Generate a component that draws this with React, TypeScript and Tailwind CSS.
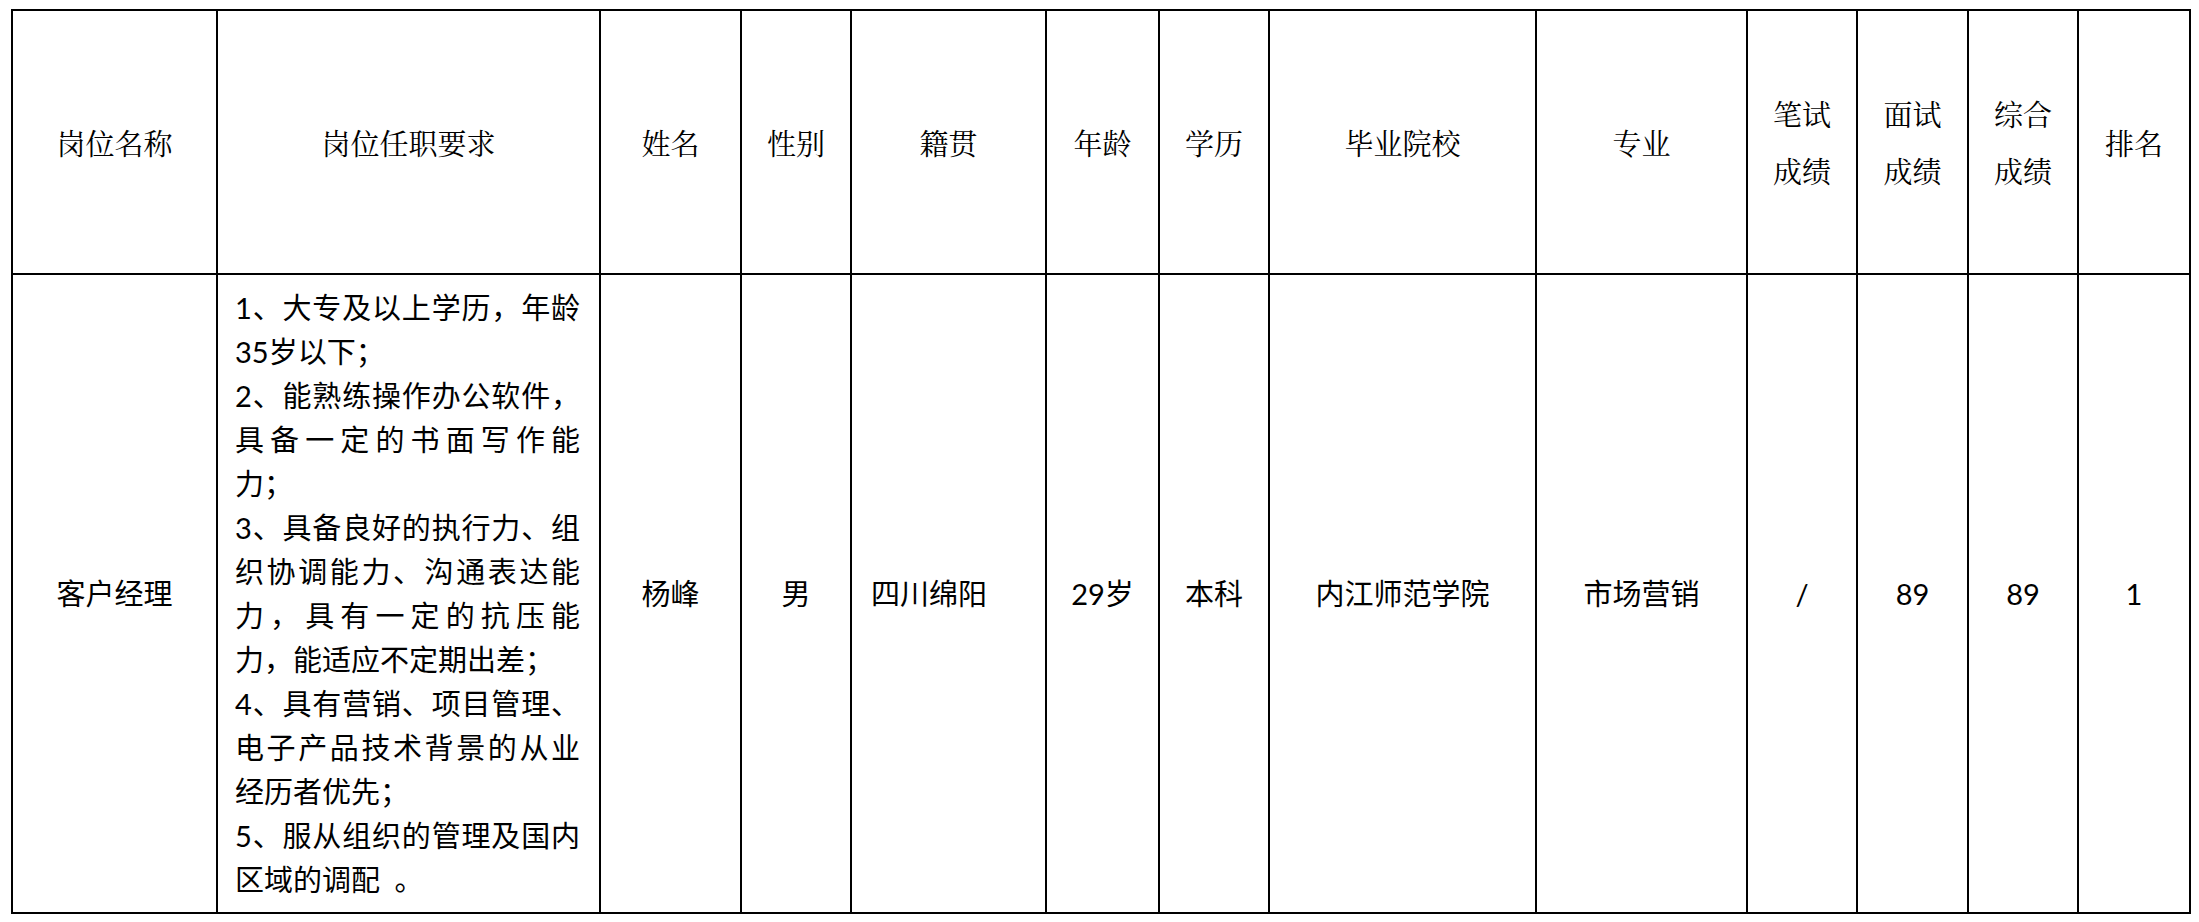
import React from "react";

const headers: React.ReactNode[] = [
  "岗位名称",
  "岗位任职要求",
  "姓名",
  "性别",
  "籍贯",
  "年龄",
  "学历",
  "毕业院校",
  "专业",
  <>笔试<br />成绩</>,
  <>面试<br />成绩</>,
  <>综合<br />成绩</>,
  "排名",
];

const reqs = [
  "1、大专及以上学历，年龄35岁以下；",
  "2、能熟练操作办公软件，具备一定的书面写作能力；",
  "3、具备良好的执行力、组织协调能力、沟通表达能力，具有一定的抗压能力，能适应不定期出差；",
  "4、具有营销、项目管理、电子产品技术背景的从业经历者优先；",
  "5、服从组织的管理及国内区域的调配\u2002。",
];

const headCls =
  "bg-white flex items-center justify-center text-center text-[29px] leading-[57px] text-black font-['Noto_Serif_CJK_SC','Noto_Serif_SC','Noto_Sans_CJK_SC',serif]";
const bodyCls =
  "bg-white flex items-center justify-center text-center text-[29px] leading-[44px] text-black font-['Lato','Noto_Sans_CJK_SC',sans-serif]";

export default function App() {
  return (
    <div className="min-h-screen bg-white pt-[9px] pl-[11px]">
      <div className="inline-grid grid-cols-[203px_381px_139px_108px_193px_111px_108px_265px_209px_108px_109px_108px_110px] grid-rows-[262px_auto] gap-[2px] bg-black p-[2px]">
        {headers.map((h, i) => (
          <div key={i} className={headCls}>
            <div>{h}</div>
          </div>
        ))}
        <div className={bodyCls}>客户经理</div>
        <div className="bg-white pl-[17px] pr-[19px] pt-[11px] pb-[10px] text-[29px] leading-[44px] text-black text-justify font-['Lato','Noto_Sans_CJK_SC',sans-serif]">
          {reqs.map((r, i) => (
            <div key={i}>{r}</div>
          ))}
        </div>
        <div className={bodyCls}>杨峰</div>
        <div className={bodyCls}>男</div>
        <div className="bg-white flex items-center justify-start pl-[19px] text-[29px] leading-[44px] text-black font-['Lato','Noto_Sans_CJK_SC',sans-serif]">
          四川绵阳
        </div>
        <div className={bodyCls}>29岁</div>
        <div className={bodyCls}>本科</div>
        <div className={bodyCls}>内江师范学院</div>
        <div className={bodyCls}>市场营销</div>
        <div className={bodyCls}>/</div>
        <div className={bodyCls}>89</div>
        <div className={bodyCls}>89</div>
        <div className={bodyCls}>1</div>
      </div>
    </div>
  );
}
